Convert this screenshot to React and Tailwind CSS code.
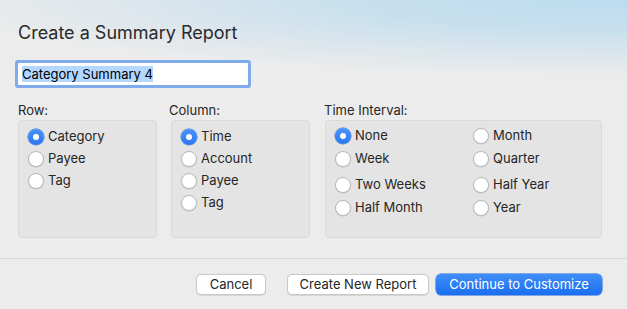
import { useState } from "react";

const ROW = ["Category", "Payee", "Tag"];
const COLUMN = ["Time", "Account", "Payee", "Tag"];
const INTERVAL_LEFT = ["None", "Week", "Two Weeks", "Half Month"];
const INTERVAL_RIGHT = ["Month", "Quarter", "Half Year", "Year"];
const INTERVAL_GAPS = ["mt-0", "mt-[1px]", "mt-[4px]", "mt-[1px]"];

function Radio({ label, checked, onSelect, className = "" }) {
  return (
    <button
      type="button"
      onClick={onSelect}
      className={`flex h-[22px] items-center gap-[4px] text-left text-[13px] text-[#262626] ${className}`}
    >
      {checked ? (
        <span className="flex h-[16px] w-[16px] shrink-0 items-center justify-center rounded-full bg-gradient-to-b from-[#4a93f8] to-[#2a76f0] shadow-[0_0_0_0.5px_#2e6fd6]">
          <span className="h-[6px] w-[6px] rounded-full bg-white" />
        </span>
      ) : (
        <span className="h-[16px] w-[16px] shrink-0 rounded-full border border-[#b8b8b8] bg-white shadow-[0_0.5px_1px_rgba(0,0,0,0.12)]" />
      )}
      <span>{label}</span>
    </button>
  );
}

function Group({ label, width, children, labelClass = "" }) {
  return (
    <div className={`flex flex-col ${width}`}>
      <div className={`h-[16px] text-[13px] leading-[16px] text-[#262626] ${labelClass}`}>{label}</div>
      <div className="mt-[2px] h-[118px] rounded-[4px] border border-[#dadada] bg-[#e4e4e4]">{children}</div>
    </div>
  );
}

export default function App() {
  const [row, setRow] = useState("Category");
  const [col, setCol] = useState("Time");
  const [interval, setInterval] = useState("None");

  return (
    <div
      className="flex h-[309px] w-[627px] flex-col bg-[#ececec] bg-[radial-gradient(ellipse_700px_78px_at_100%_0%,#bcdcef_0%,#c8e0ee_40%,#dfe7ec_75%,#ececec_100%)] text-[#262626]"
      style={{ fontFamily: "Inter, 'Liberation Sans', sans-serif" }}
    >
      <div className="px-[18px]">
        <h1 className="pt-[22px] text-[18px] leading-[22px] text-[#2a2a2a]">Create a Summary Report</h1>

        <div className="mt-[19px] flex h-[22px] w-[230px] items-center rounded-[1px] bg-white pl-[4px] shadow-[0_0_0_3px_#7fabec]">
          <span className="bg-[#b3d7ff] text-[13px] leading-[16px] text-black">Category Summary 4</span>
        </div>

        <div className="mt-[17px] flex">
          <Group label="Row:" width="w-[139px]">
            <div className="flex flex-col pl-[9px] pt-[5px]">
              {ROW.map((r) => (
                <Radio key={r} label={r} checked={row === r} onSelect={() => setRow(r)} />
              ))}
            </div>
          </Group>
          <Group label="Column:" width="ml-[14px] w-[139px]" labelClass="-ml-[2px]">
            <div className="flex flex-col pl-[9px] pt-[5px]">
              {COLUMN.map((c) => (
                <Radio key={c} label={c} checked={col === c} onSelect={() => setCol(c)} />
              ))}
            </div>
          </Group>
          <Group label="Time Interval:" width="ml-[15px] w-[277px]" labelClass="-ml-[1px]">
            <div className="flex pl-[9px] pt-[4px]">
              <div className="flex w-[138px] flex-col">
                {INTERVAL_LEFT.map((t, i) => (
                  <Radio key={t} label={t} className={INTERVAL_GAPS[i]} checked={interval === t} onSelect={() => setInterval(t)} />
                ))}
              </div>
              <div className="flex flex-col">
                {INTERVAL_RIGHT.map((t, i) => (
                  <Radio key={t} label={t} className={INTERVAL_GAPS[i]} checked={interval === t} onSelect={() => setInterval(t)} />
                ))}
              </div>
            </div>
          </Group>
        </div>
      </div>

      <div className="mt-[20px] h-px w-full bg-[#d8d8d8]" />

      <div className="mt-[15px] flex justify-end pr-[25px] text-[13px]">
        <button className="h-[21px] w-[70px] rounded-[5px] border border-[#c9c9c9] bg-white text-[#262626] shadow-[0_0.5px_1px_rgba(0,0,0,0.1)]">
          Cancel
        </button>
        <button className="ml-[21px] h-[21px] w-[142px] rounded-[5px] border border-[#c9c9c9] bg-white text-[#262626] shadow-[0_0.5px_1px_rgba(0,0,0,0.1)]">
          Create New Report
        </button>
        <button className="ml-[7px] h-[21px] w-[166px] rounded-[5px] bg-gradient-to-b from-[#3f8ef8] to-[#1a6ef0] text-white shadow-[0_0_0_0.5px_#1d63d6]">
          Continue to Customize
        </button>
      </div>
    </div>
  );
}
